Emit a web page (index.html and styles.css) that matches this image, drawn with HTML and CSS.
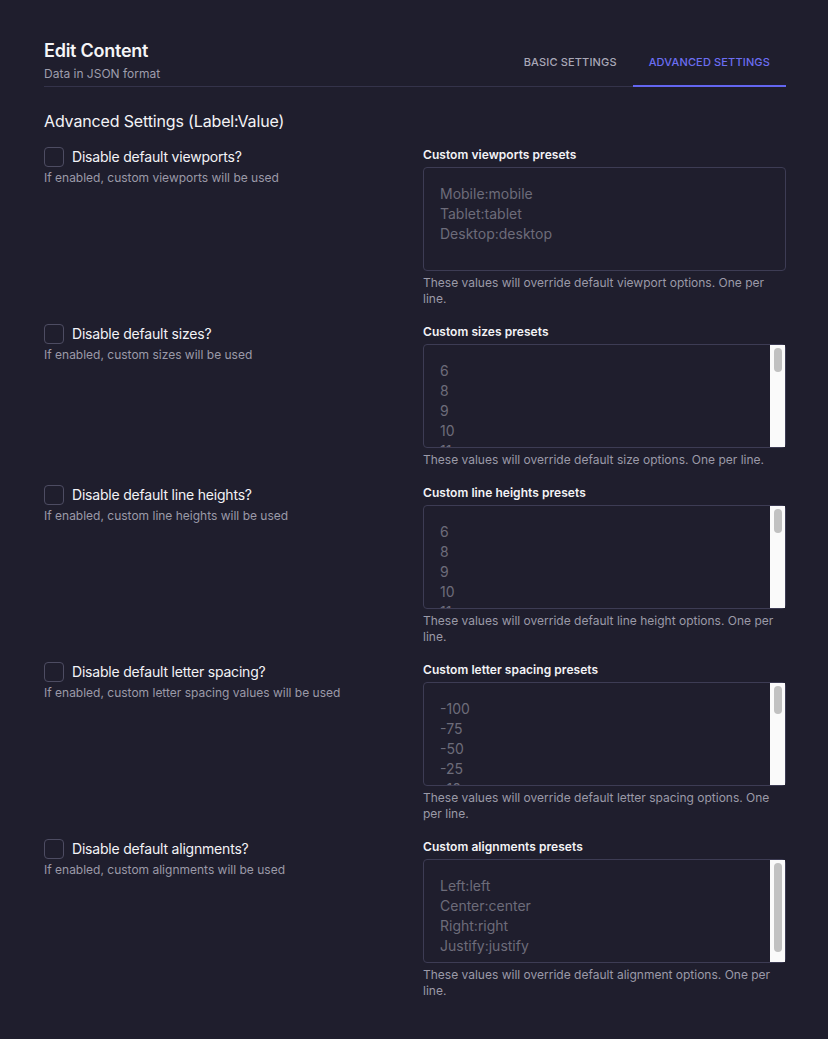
FILE: index.html
```html
<!DOCTYPE html>
<html lang="en">
<head>
<meta charset="utf-8">
<title>Edit Content</title>
<link rel="stylesheet" href="styles.css">
</head>
<body>
<div class="page">
  <header class="header">
    <div class="title-block">
      <h1 class="title">Edit Content</h1>
      <p class="subtitle">Data in JSON format</p>
    </div>
    <nav class="tabs">
      <span class="tab">Basic Settings</span>
      <span class="tab tab-active">Advanced Settings</span>
    </nav>
  </header>

  <h2 class="section-title">Advanced Settings (Label:Value)</h2>

  <div class="rows">
    <div class="row">
      <div class="left">
        <label class="check"><span class="box"></span><span class="check-label">Disable default viewports?</span></label>
        <p class="help">If enabled, custom viewports will be used</p>
      </div>
      <div class="right">
        <div class="field-label">Custom viewports presets</div>
        <div class="ta-wrap">
          <textarea class="presets" readonly>Mobile:mobile
Tablet:tablet
Desktop:desktop</textarea>
        </div>
        <p class="hint">These values will override default viewport options. One per line.</p>
      </div>
    </div>

    <div class="row">
      <div class="left">
        <label class="check"><span class="box"></span><span class="check-label">Disable default sizes?</span></label>
        <p class="help">If enabled, custom sizes will be used</p>
      </div>
      <div class="right">
        <div class="field-label">Custom sizes presets</div>
        <div class="ta-wrap">
          <textarea class="presets" readonly>6
8
9
10
11
12
14
16
18
20
24
28
32
36
40
48
56
64
72
80
96</textarea>
          <div class="sb"><div class="sb-thumb" style="height: 24px"></div></div>
        </div>
        <p class="hint">These values will override default size options. One per line.</p>
      </div>
    </div>

    <div class="row">
      <div class="left">
        <label class="check"><span class="box"></span><span class="check-label">Disable default line heights?</span></label>
        <p class="help">If enabled, custom line heights will be used</p>
      </div>
      <div class="right">
        <div class="field-label">Custom line heights presets</div>
        <div class="ta-wrap">
          <textarea class="presets" readonly>6
8
9
10
11
12
14
16
18
20
24
28
32
36
40
48
56
64
72
80
96</textarea>
          <div class="sb"><div class="sb-thumb" style="height: 24px"></div></div>
        </div>
        <p class="hint">These values will override default line height options. One per line.</p>
      </div>
    </div>

    <div class="row">
      <div class="left">
        <label class="check"><span class="box"></span><span class="check-label">Disable default letter spacing?</span></label>
        <p class="help">If enabled, custom letter spacing values will be used</p>
      </div>
      <div class="right">
        <div class="field-label">Custom letter spacing presets</div>
        <div class="ta-wrap">
          <textarea class="presets" readonly>-100
-75
-50
-25
-10
-5
0
5
10
25
50
75
100
150
200
250
300</textarea>
          <div class="sb"><div class="sb-thumb" style="height: 28px"></div></div>
        </div>
        <p class="hint">These values will override default letter spacing options. One per line.</p>
      </div>
    </div>

    <div class="row">
      <div class="left">
        <label class="check"><span class="box"></span><span class="check-label">Disable default alignments?</span></label>
        <p class="help">If enabled, custom alignments will be used</p>
      </div>
      <div class="right">
        <div class="field-label">Custom alignments presets</div>
        <div class="ta-wrap">
          <textarea class="presets" readonly>Left:left
Center:center
Right:right
Justify:justify</textarea>
          <div class="sb"><div class="sb-thumb" style="height: 89px"></div></div>
        </div>
        <p class="hint">These values will override default alignment options. One per line.</p>
      </div>
    </div>
  </div>
</div>
</body>
</html>
```

FILE: styles.css
```css
* { box-sizing: border-box; }

html, body {
  margin: 0;
  background: #1f1e2d;
}

body {
  font-family: Inter, "Noto Sans", "Liberation Sans", sans-serif;
  color: #f3f3f6;
}

.page {
  padding: 37px 42px 40px 44px;
}

.header {
  display: flex;
  justify-content: space-between;
  align-items: flex-end;
  border-bottom: 1px solid #34334a;
}

.title-block {
  padding-bottom: 4px;
}

.title {
  margin: 0;
  font-size: 18px;
  line-height: 28px;
  font-weight: 600;
  letter-spacing: -0.25px;
  color: #f5f5f7;
}

.subtitle {
  margin: 1px 0 0;
  font-size: 12px;
  line-height: 16px;
  color: #9e9dac;
}

.tabs {
  display: flex;
  margin-bottom: -1px;
}

.tab {
  padding: 13px 16px 15px;
  font-size: 11px;
  line-height: 16px;
  font-weight: 500;
  letter-spacing: 0.15px;
  text-transform: uppercase;
  color: #a9a8b7;
  border-bottom: 2px solid transparent;
}

.tab-active {
  color: #6c6ef2;
  border-bottom-color: #6366f1;
}

.section-title {
  margin: 22px 0 14px;
  font-size: 16px;
  line-height: 24px;
  font-weight: 400;
  letter-spacing: -0.15px;
  color: #f3f3f6;
}

.rows {
  display: flex;
  flex-direction: column;
  gap: 17px;
}

.row {
  display: grid;
  grid-template-columns: 1fr 1fr;
  column-gap: 16px;
}

.check {
  display: flex;
  align-items: center;
  gap: 8px;
}

.box {
  width: 20px;
  height: 20px;
  border: 1px solid #4d4c62;
  border-radius: 4px;
  flex: none;
}

.check-label {
  font-size: 14px;
  line-height: 20px;
  letter-spacing: -0.2px;
  color: #f3f3f6;
}

.help {
  margin: 3px 0 0;
  font-size: 12px;
  line-height: 16px;
  color: #9b9aa8;
}

.field-label {
  font-size: 12px;
  line-height: 16px;
  font-weight: 600;
  letter-spacing: 0.05px;
  color: #f3f3f6;
  margin-bottom: 4px;
}

.ta-wrap {
  position: relative;
}

.presets {
  display: block;
  width: 100%;
  height: 104px;
  margin: 0;
  padding: 16px;
  border: 1px solid #3d3c54;
  border-radius: 4px;
  background: #1f1e2d;
  color: #6d6c7a;
  font-family: Inter, "Noto Sans", "Liberation Sans", sans-serif;
  font-size: 14px;
  line-height: 20px;
  resize: none;
  outline: none;
  overflow: hidden;
}

.sb {
  position: absolute;
  top: 1px;
  bottom: 1px;
  right: 1px;
  width: 15px;
  background: #fafafa;
}

.sb-thumb {
  position: absolute;
  top: 3px;
  left: 4px;
  width: 8px;
  border-radius: 4px;
  background: #c1c1c1;
}

.hint {
  margin: 4px 0 0;
  font-size: 12px;
  line-height: 16px;
  color: #9b9aa8;
}
```
